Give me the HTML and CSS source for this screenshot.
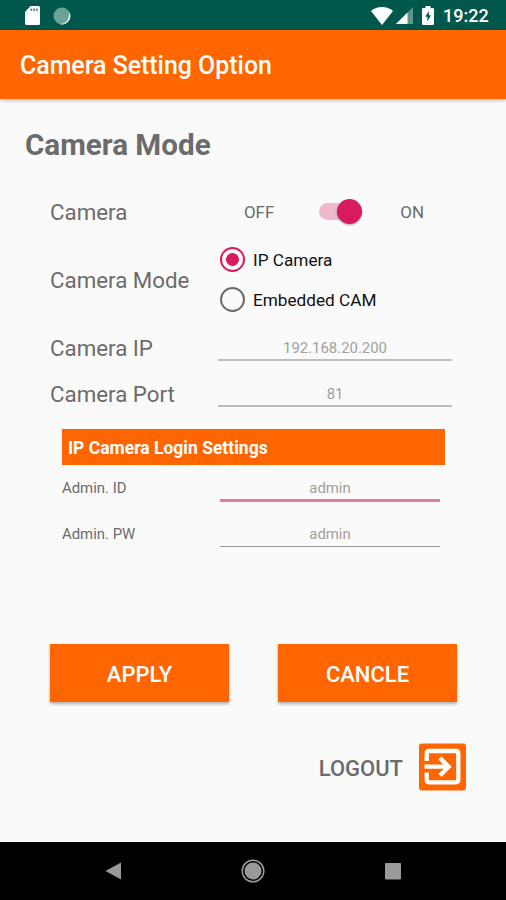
FILE: index.html
```
<!DOCTYPE html>
<html lang="en">
<head>
    <meta charset="UTF-8">
    <meta name="viewport" content="width=device-width, initial-scale=1.0">
    <title>Camera Setting Option</title>
    <link rel="stylesheet" href="styles.css">
</head>
<body>
    <div class="status-bar">
        <svg class="sd" width="15" height="19" viewBox="0 0 15 19">
            <path fill="#fff" d="M5.5 0H13.5Q15 0 15 1.5V17.5Q15 19 13.5 19H1.500Q0 19 0 17.500V6Z"/>
            <path fill="#5d8f86" d="M5.500 2.500H7.200V5H5.500ZM8.300 2.500H10V5H8.300ZM11.100 2.500H12.800V5H11.100Z"/>
        </svg>
        <svg class="sync" width="18" height="18" viewBox="0 0 18 18">
            <circle cx="9" cy="9" r="8.500" fill="#6ba198"/>
            <path fill="#e6f0ee" d="M16.300 5A8.500 8.500 0 0 1 7 17.300Q11.500 17 14 14Q16.500 11 16.300 5Z"/>
        </svg>
        <svg class="wifi" width="22" height="18" viewBox="0 0 22 18">
            <path fill="#fff" d="M0 4Q4.500 0 11 0T22 4L11 18Z"/>
        </svg>
        <svg class="signal" width="17" height="17" viewBox="0 0 17 17">
            <path fill="#5d958b" d="M17 0V17H0Z"/>
            <path fill="#fff" d="M11.500 5.500V17H0Z"/>
        </svg>
        <svg class="battery" width="12" height="19" viewBox="0 0 12 19">
            <path fill="#fff" d="M3.500 0H8.500V2H10.800Q12 2 12 3.200V17.800Q12 19 10.800 19H1.200Q0 19 0 17.800V3.200Q0 2 1.200 2H3.500Z"/>
            <path fill="#00574b" d="M6.800 5L3.300 10.800H5.400V15.500L8.900 9.300H6.800Z"/>
        </svg>
        <span class="clock">19:22</span>
    </div>

    <div class="app-bar">Camera Setting Option</div>

    <div class="content">
        <h1 class="heading">Camera Mode</h1>

        <div class="row camera-row">
            <span class="label">Camera</span>
            <div class="switch-box">
                <span class="state">OFF</span>
                <span class="switch"><span class="thumb"></span></span>
                <span class="state">ON</span>
            </div>
        </div>

        <div class="row mode-row">
            <span class="label">Camera Mode</span>
            <div class="radios">
                <div class="radio checked"><i class="dot"></i><span>IP Camera</span></div>
                <div class="radio"><i class="dot"></i><span>Embedded CAM</span></div>
            </div>
        </div>

        <div class="row">
            <span class="label">Camera IP</span>
            <div class="field">192.168.20.200</div>
        </div>
        <div class="row">
            <span class="label">Camera Port</span>
            <div class="field">81</div>
        </div>

        <div class="login">
            <h2 class="login-title">IP Camera Login Settings</h2>
            <div class="row">
                <span class="small-label">Admin. ID</span>
                <div class="field active">admin</div>
            </div>
            <div class="row">
                <span class="small-label">Admin. PW</span>
                <div class="field">admin</div>
            </div>
        </div>

        <div class="buttons">
            <div class="btn">APPLY</div>
            <div class="btn">CANCLE</div>
        </div>

        <div class="logout">
            <span class="logout-text">LOGOUT</span>
            <svg width="47" height="48" viewBox="0 0 47 48">
                <rect y="0.500" width="47" height="47" rx="3" fill="#ff6600"/>
                <g fill="none" stroke="#fff" stroke-width="4.300">
                    <path d="M7.700 18V10.500Q7.700 8 10.200 8H36.800Q39.300 8 39.300 10.500V36.800Q39.300 39.300 36.800 39.300H10.200Q7.700 39.300 7.700 36.800V29.500"/>
                    <path d="M5.500 23.700H30M21 15L29.700 23.700L21 32.400"/>
                </g>
            </svg>
        </div>
    </div>

    <div class="nav-bar">
        <svg width="16" height="18" viewBox="0 0 16 18"><path fill="#999" d="M16 0.500V17.500L0.500 9Z"/></svg>
        <svg width="24" height="24" viewBox="0 0 24 24">
            <circle cx="12" cy="12" r="8.500" fill="#999"/>
            <circle cx="12" cy="12" r="10.800" fill="none" stroke="#999" stroke-width="1.500"/>
        </svg>
        <svg width="16" height="17" viewBox="0 0 16 17"><rect width="16" height="16.500" rx="1" fill="#999"/></svg>
    </div>
</body>
</html>
```
FILE: styles.css
```
* {
    margin: 0;
    padding: 0;
    box-sizing: border-box;
}

body {
    width: 506px;
    height: 900px;
    display: flex;
    flex-direction: column;
    background: #fafafa;
    color: #6b6b6b;
    font-family: Roboto, sans-serif;
    overflow: hidden;
    white-space: nowrap;
}

svg {
    display: block;
    flex: none;
}

.status-bar {
    height: 30px;
    display: flex;
    align-items: center;
    padding: 1px 18px 0 25px;
    background: #00574b;
    color: #fff;
}

.sync {
    margin-left: 13px;
}

.wifi {
    margin-left: auto;
}

.signal {
    margin-left: 3px;
}

.battery {
    margin: 0 9px;
}

.clock {
    width: 45px;
    font-size: 18px;
    font-weight: 500;
}

.app-bar {
    height: 69px;
    padding: 1px 20px 0;
    line-height: 70px;
    background: #ff6600;
    color: #fff;
    font-size: 24.9px;
    font-weight: 500;
    box-shadow: 0 1px 4px rgba(0, 0, 0, 0.3);
    z-index: 1;
}

.content {
    height: 743px;
}

.heading {
    height: 88px;
    padding: 2px 0 0 25px;
    line-height: 88px;
    font-size: 29.6px;
    font-weight: 700;
}

.row {
    height: 46px;
    display: flex;
    align-items: center;
    padding-left: 50px;
}

.camera-row {
    height: 50px;
}

.mode-row {
    height: 88px;
}

.label {
    width: 168px;
    padding-bottom: 1px;
    font-size: 22.3px;
}

.mode-row .label {
    padding-bottom: 2px;
}

.switch-box {
    display: flex;
    align-items: center;
    padding-left: 26px;
}

.state {
    font-size: 16.9px;
}

.switch {
    position: relative;
    width: 43px;
    height: 17px;
    margin: 0 38px 2px 45px;
    border-radius: 9px;
    background: #f0b8cd;
}

.thumb {
    position: absolute;
    top: -4px;
    right: 0;
    width: 25px;
    height: 25px;
    border-radius: 50%;
    background: #d81b60;
    box-shadow: 0 1px 2px rgba(0, 0, 0, 0.35);
}

.radios {
    padding-bottom: 3px;
}

.radio {
    height: 40px;
    display: flex;
    align-items: center;
    padding-left: 2px;
    color: #111;
    font-size: 17.2px;
}

.dot {
    width: 25px;
    height: 25px;
    margin-right: 8px;
    border: 2px solid #6b6b6b;
    border-radius: 50%;
}

.checked .dot {
    border-color: #d81b60;
    background: radial-gradient(circle, #d81b60 6px, transparent 6.800px);
}

.field {
    width: 234px;
    height: 26px;
    border-bottom: 2px solid #bdbdbd;
    line-height: 27px;
    text-align: center;
    color: #a0a0a0;
    font-size: 14.9px;
}

.login {
    width: 383px;
    margin: 12px 0 0 62px;
}

.login-title {
    height: 36px;
    padding: 1px 6px 0;
    line-height: 36px;
    background: #ff6600;
    color: #fff;
    font-size: 17.5px;
    font-weight: 700;
}

.login .row {
    padding-left: 0;
}

.small-label {
    width: 158px;
    font-size: 14.9px;
}

.login .field {
    width: 220px;
    border-bottom: 1px solid #999;
}

.login .active {
    height: 27px;
    border-bottom: 3px solid #df7d9c;
}

.buttons {
    display: flex;
    justify-content: space-between;
    margin: 87px 49px 0 50px;
}

.btn {
    width: 179px;
    height: 58px;
    line-height: 61px;
    background: #ff6600;
    color: #fff;
    text-align: center;
    font-size: 22px;
    font-weight: 500;
    box-shadow: 0 2px 3px rgba(0, 0, 0, 0.3);
}

.logout {
    display: flex;
    justify-content: flex-end;
    align-items: center;
    margin: 41px 40px 0 0;
}

.logout-text {
    margin-right: 16px;
    padding-top: 2px;
    font-size: 22px;
    font-weight: 500;
}

.nav-bar {
    height: 58px;
    display: flex;
    justify-content: space-between;
    align-items: center;
    padding: 0 105px;
    background: #000;
}
```
